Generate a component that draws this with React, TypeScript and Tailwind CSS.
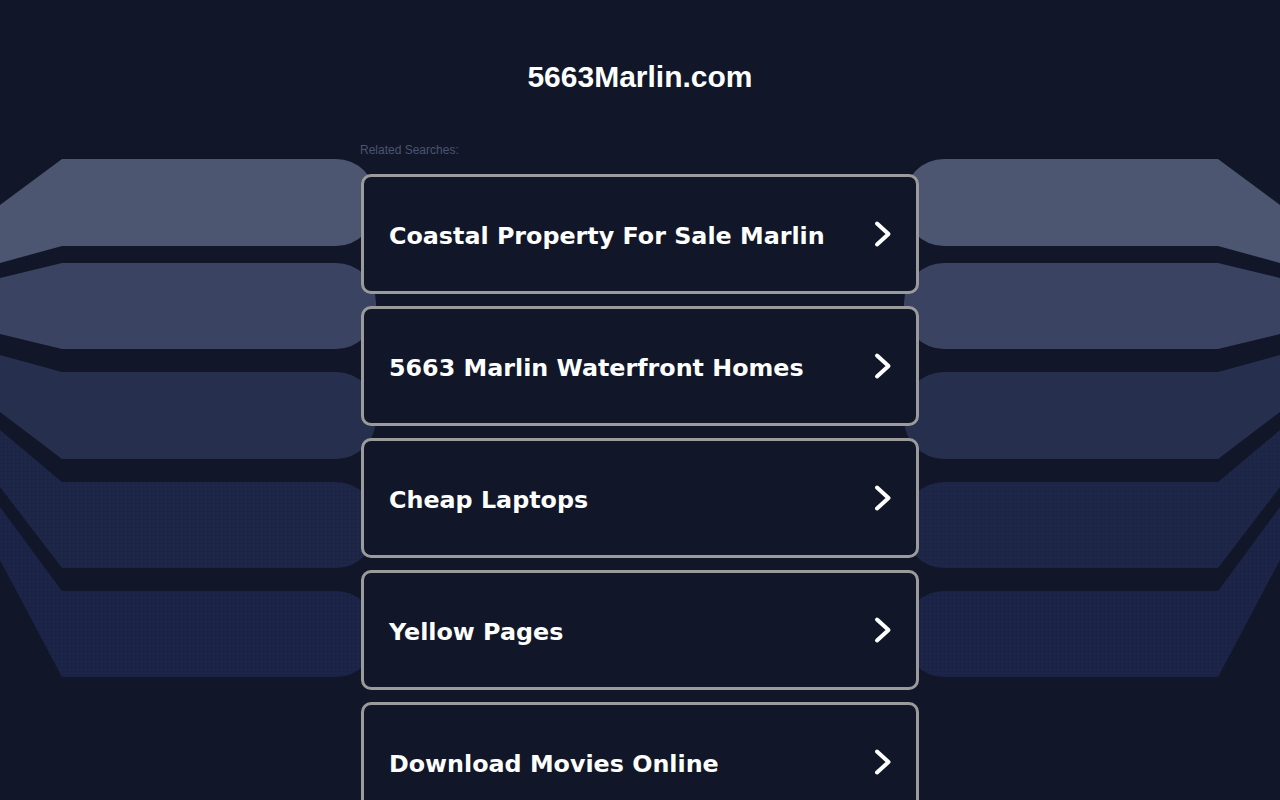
import React from "react";

const items = [
  "Coastal Property For Sale Marlin",
  "5663 Marlin Waterfront Homes",
  "Cheap Laptops",
  "Yellow Pages",
  "Download Movies Online",
];

const bands = [
  { a: 205, b: 159, c: 246, d: 263, fill: "#4c5671", dots: false },
  { a: 278, b: 263, c: 349, d: 334, fill: "#3a4361", dots: false },
  { a: 355, b: 372, c: 459, d: 412, fill: "#262f4d", dots: false },
  { a: 430, b: 482, c: 568, d: 487, fill: "#1d2646", dots: true },
  { a: 507, b: 591, c: 677, d: 560, fill: "#1b2446", dots: true },
];

function bandPath(a: number, b: number, c: number, d: number) {
  const X = 376;
  const r = 40;
  return `M0,${a} L62,${b} L${X - r},${b} A${r},${r} 0 0 1 ${X},${b + r} L${X},${c - r} A${r},${r} 0 0 1 ${X - r},${c} L62,${c} L0,${d} Z`;
}

function Side({ id, className }: { id: string; className: string }) {
  return (
    <svg
      className={className}
      width="380"
      height="800"
      viewBox="0 0 380 800"
      aria-hidden="true"
    >
      <defs>
        <pattern id={`dots-${id}`} width="4" height="4" patternUnits="userSpaceOnUse">
          <rect x="1" y="1" width="1" height="1" fill="#2b355c" />
          <rect x="3" y="3" width="1" height="1" fill="#151c36" />
        </pattern>
      </defs>
      {bands.map((bd, i) => (
        <g key={i}>
          <path d={bandPath(bd.a, bd.b, bd.c, bd.d)} fill={bd.fill} />
          {bd.dots && (
            <path d={bandPath(bd.a, bd.b, bd.c, bd.d)} fill={`url(#dots-${id})`} opacity="0.35" />
          )}
        </g>
      ))}
    </svg>
  );
}

function Chevron() {
  return (
    <svg width="20" height="28" viewBox="0 0 20 28" className="shrink-0">
      <path
        d="M4 3.5 L15.5 14 L4 24.5"
        fill="none"
        stroke="#ffffff"
        strokeWidth="4"
        strokeLinecap="round"
        strokeLinejoin="round"
      />
    </svg>
  );
}

export default function App() {
  return (
    <div className="relative min-h-screen w-full overflow-hidden bg-[#111729]">
      <div className="pointer-events-none absolute inset-x-0 top-0 h-[800px]">
        <Side id="l" className="absolute left-0 top-0" />
        <Side id="r" className="absolute right-0 top-0 -scale-x-100" />
      </div>
      <div className="relative z-10 flex flex-col items-center">
        <h1 className="mt-[59px] h-[36px] text-[30px] font-bold leading-[36px] text-white [font-family:'Liberation_Sans',Arial,sans-serif]">
          5663Marlin.com
        </h1>
        <div className="mt-[47px] w-[558px]">
          <div className="-ml-px h-[16px] text-[12px] leading-[16px] text-[#4a5472] [font-family:'Liberation_Sans',Arial,sans-serif]">
            Related Searches:
          </div>
          <div className="mt-[16px] flex flex-col gap-3">
            {items.map((t) => (
              <div
                key={t}
                className="flex h-[120px] items-center justify-between rounded-[10px] border-[3px] border-[#9b9b9b] bg-[#111729] pl-[25px] pr-[23px]"
              >
                <span className="pt-[6px] text-[23.8px] font-bold text-white [font-family:'DejaVu_Sans',Verdana,sans-serif]">
                  {t}
                </span>
                <Chevron />
              </div>
            ))}
          </div>
        </div>
      </div>
    </div>
  );
}
